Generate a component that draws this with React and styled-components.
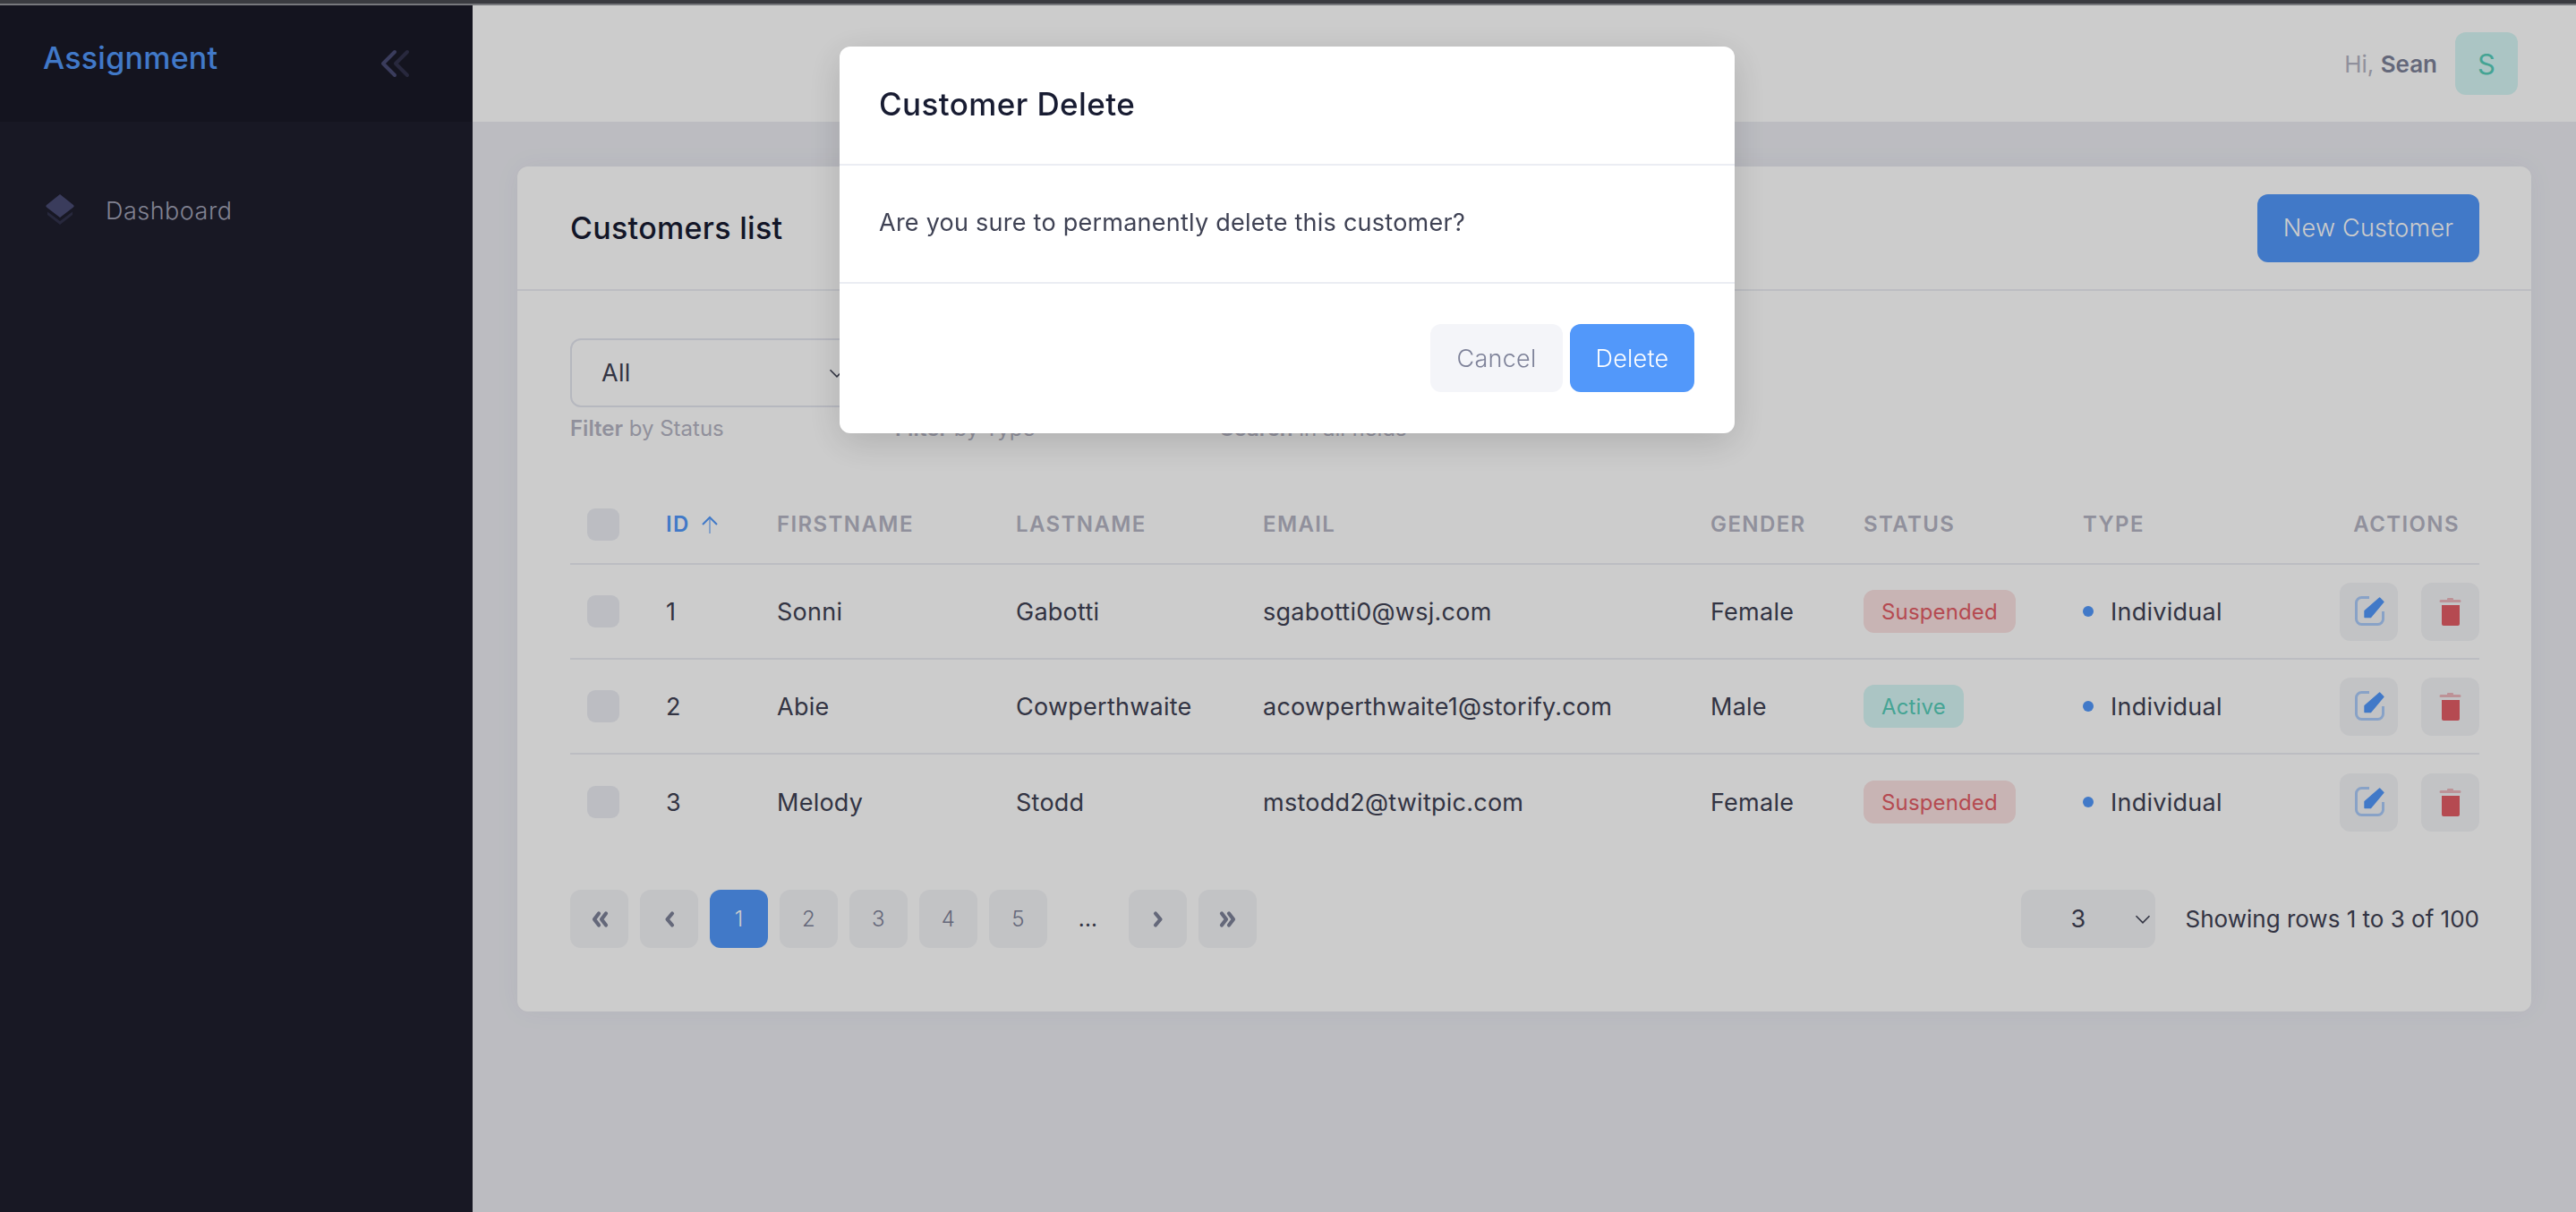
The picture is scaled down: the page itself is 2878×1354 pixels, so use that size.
import React from 'react'
import styled, { createGlobalStyle } from 'styled-components'

const GlobalStyle = createGlobalStyle`
html, body { margin: 0; padding: 0; height: 100%; overflow: hidden; }
body { font-family: "Inter", "Liberation Sans", sans-serif; font-size: 27px; letter-spacing: 0.25px; color: #3f4254; background: #ebecf2; }
* { box-sizing: border-box; }
`

const customers = [
    { id: 1, first: 'Sonni', last: 'Gabotti', email: 'sgabotti0@wsj.com', gender: 'Female', status: 'Suspended' },
    { id: 2, first: 'Abie', last: 'Cowperthwaite', email: 'acowperthwaite1@storify.com', gender: 'Male', status: 'Active' },
    { id: 3, first: 'Melody', last: 'Stodd', email: 'mstodd2@twitpic.com', gender: 'Female', status: 'Suspended' },
]

function Chevron({ size = 20 }) {
    return (
        <svg width={size} height={size} viewBox="0 0 16 16" fill="none" stroke="#3f4254" strokeWidth="1.3">
            <path d="M2 5l6 6 6-6" />
        </svg>
    )
}

function PageArrow({ double, right }) {
    return (
        <svg width="22" height="22" viewBox="0 0 22 22" fill="none" stroke="#7e8299" strokeWidth="4.2" strokeLinecap="round" strokeLinejoin="round">
            <g transform={right ? 'translate(22 0) scale(-1 1)' : undefined}>
                {double ? (
                    <>
                        <path d="M10 4.500L5 11l5 6.500" />
                        <path d="M18 4.500L13 11l5 6.500" />
                    </>
                ) : (
                    <path d="M14 4.500L8.500 11l5.500 6.500" />
                )}
            </g>
        </svg>
    )
}

function EditIcon() {
    return (
        <svg width="40" height="40" viewBox="0 0 40 40" fill="none">
            <path d="M20 4.500H11.500a6 6 0 0 0-6 6v18a6 6 0 0 0 6 6h18a6 6 0 0 0 6-6V20" stroke="#5298fa" strokeOpacity="0.45" strokeWidth="3" />
            <path d="M15 19.500L31.600 5l4.400 4.400L21.600 26.500H15z" fill="#5298fa" stroke="#5298fa" strokeWidth="1.4" strokeLinejoin="round" />
        </svg>
    )
}

function TrashIcon() {
    return (
        <svg width="40" height="40" viewBox="0 0 40 40" fill="none">
            <path d="M10 13h20v21a2 2 0 0 1-2 2H12a2 2 0 0 1-2-2z" fill="#e35d66" />
            <path d="M16 7V6a1 1 0 0 1 1-1h5a1 1 0 0 1 1 1v1h7a1.500 1.500 0 0 1 0 3H9a1.500 1.500 0 0 1 0-3z" fill="#e35d66" fillOpacity="0.4" />
        </svg>
    )
}

function App() {
    return (
        <Page>
            <GlobalStyle />
            <WindowEdge />
            <Layout>
                <Sidebar>
                    <Brand>
                        <BrandName>Assignment</BrandName>
                        <svg width="34" height="32" viewBox="0 0 34 32" fill="none" strokeWidth="4" strokeLinecap="round" strokeLinejoin="round">
                            <path d="M17 3L4 16l13 13" stroke="#494b74" />
                            <path d="M31 3L18 16l13 13" stroke="#494b74" strokeOpacity="0.5" />
                        </svg>
                    </Brand>
                    <NavItem>
                        <svg width="34" height="36" viewBox="0 0 34 36">
                            <path d="M17 1l15 12a1.500 1.500 0 0 1 0 2.400L17 27 2 15.400A1.500 1.500 0 0 1 2 13z" fill="#494b74" />
                            <path d="M3 24l14 11 14-11v-3.500L17 31 3 20.500z" fill="#494b74" fillOpacity="0.45" />
                        </svg>
                        <NavLabel>Dashboard</NavLabel>
                    </NavItem>
                </Sidebar>

                <Main>
                    <TopBar>
                        <Greeting>Hi, <b>Sean</b></Greeting>
                        <Avatar>S</Avatar>
                    </TopBar>
                    <Content>
                        <Card>
                            <CardHeader>
                                <CardTitle>Customers list</CardTitle>
                                <PrimaryButton>New Customer</PrimaryButton>
                            </CardHeader>
                            <CardBody>
                                <Filters>
                                    <Filter>
                                        <SelectBox>All<Chevron /></SelectBox>
                                        <Hint><b>Filter</b> by Status</Hint>
                                    </Filter>
                                    <Filter>
                                        <SelectBox>All<Chevron /></SelectBox>
                                        <Hint><b>Filter</b> by Type</Hint>
                                    </Filter>
                                    <Filter>
                                        <SelectBox />
                                        <Hint><b>Search</b> in all fields</Hint>
                                    </Filter>
                                </Filters>

                                <HeadRow>
                                    <Cell><Check /></Cell>
                                    <HeadCell $active>
                                        ID
                                        <svg width="20" height="22" viewBox="0 0 20 22" fill="none" strokeWidth="2">
                                            <path d="M10 3v18" stroke="#5298fa" strokeOpacity="0.5" />
                                            <path d="M2 11l8-8 8 8" stroke="#5298fa" />
                                        </svg>
                                    </HeadCell>
                                    <HeadCell>FIRSTNAME</HeadCell>
                                    <HeadCell>LASTNAME</HeadCell>
                                    <HeadCell>EMAIL</HeadCell>
                                    <HeadCell>GENDER</HeadCell>
                                    <HeadCell>STATUS</HeadCell>
                                    <HeadCell>TYPE</HeadCell>
                                    <HeadCell $end>ACTIONS</HeadCell>
                                </HeadRow>

                                {customers.map((c, i) => (
                                    <Row key={c.id} $last={i === customers.length - 1}>
                                        <Cell><Check /></Cell>
                                        <Cell>{c.id}</Cell>
                                        <Cell>{c.first}</Cell>
                                        <Cell>{c.last}</Cell>
                                        <Cell>{c.email}</Cell>
                                        <Cell>{c.gender}</Cell>
                                        <Cell><Badge $active={c.status === 'Active'}>{c.status}</Badge></Cell>
                                        <Cell><Dot />Individual</Cell>
                                        <ActionCell>
                                            <IconButton><EditIcon /></IconButton>
                                            <IconButton><TrashIcon /></IconButton>
                                        </ActionCell>
                                    </Row>
                                ))}

                                <Footer>
                                    <Pager>
                                        <PageButton><PageArrow double /></PageButton>
                                        <PageButton><PageArrow /></PageButton>
                                        <PageButton $active>1</PageButton>
                                        <PageButton>2</PageButton>
                                        <PageButton>3</PageButton>
                                        <PageButton>4</PageButton>
                                        <PageButton>5</PageButton>
                                        <Ellipsis>...</Ellipsis>
                                        <PageButton><PageArrow right /></PageButton>
                                        <PageButton><PageArrow double right /></PageButton>
                                    </Pager>
                                    <PageInfo>
                                        <PageSize>3<Chevron /></PageSize>
                                        <RowsText>Showing rows 1 to 3 of 100</RowsText>
                                    </PageInfo>
                                </Footer>
                            </CardBody>
                        </Card>
                    </Content>
                </Main>
            </Layout>

            <Overlay>
                <Modal>
                    <ModalHeader>Customer Delete</ModalHeader>
                    <ModalBody>Are you sure to permanently delete this customer?</ModalBody>
                    <ModalFooter>
                        <CancelButton>Cancel</CancelButton>
                        <DeleteButton>Delete</DeleteButton>
                    </ModalFooter>
                </Modal>
            </Overlay>
        </Page>
    )
}

const Page = styled.div`
height: 100vh;
display: flex;
flex-direction: column;
`

const WindowEdge = styled.div`
height: 6px;
flex: none;
background: #3a3b40;
border-bottom: 2px solid #77787c;
`

const Layout = styled.div`
flex: 1;
display: flex;
min-height: 0;
`

const Sidebar = styled.div`
width: 528px;
flex: none;
background: #1e1e2d;
`

const Brand = styled.div`
height: 130px;
background: #1a1a27;
padding: 0 70px 0 48px;
display: flex;
justify-content: space-between;
align-items: center;
`

const BrandName = styled.div`
font-size: 34px;
font-weight: 500;
color: #5298fa;
margin-top: -14px;
`

const NavItem = styled.div`
display: flex;
align-items: center;
gap: 34px;
padding: 80px 0 0 50px;
`

const NavLabel = styled.div`
color: #a2a3b7;
font-weight: 300;
letter-spacing: 0.5px;
margin-top: 2px;
`

const Main = styled.div`
flex: 1;
min-width: 0;
display: flex;
flex-direction: column;
`

const TopBar = styled.div`
height: 130px;
flex: none;
background: #fff;
padding: 0 65px 0 0;
display: flex;
align-items: center;
justify-content: flex-end;
gap: 20px;
`

const Greeting = styled.div`
font-size: 26px;
letter-spacing: 0;
color: #b5b5c3;

b {
    color: #7e8299;
    font-weight: 600;
}
`

const Avatar = styled.div`
width: 70px;
height: 70px;
border-radius: 12px;
background: #d6f7f5;
color: #57ceba;
font-size: 31px;
display: flex;
justify-content: center;
align-items: center;
`

const Content = styled.div`
padding: 50px;
`

const Card = styled.div`
background: #fff;
border-radius: 12px;
box-shadow: 0 0 30px rgba(82, 63, 105, 0.05);
`

const CardHeader = styled.div`
height: 139px;
padding: 0 58px 0 59px;
border-bottom: 2px solid #ebedf3;
display: flex;
justify-content: space-between;
align-items: center;
`

const CardTitle = styled.div`
font-size: 34px;
font-weight: 500;
letter-spacing: 0.3px;
color: #181c32;
`

const PrimaryButton = styled.div`
width: 248px;
height: 76px;
border-radius: 12px;
background: #5298fa;
color: #fff;
font-weight: 300;
display: flex;
justify-content: center;
align-items: center;
`

const CardBody = styled.div`
padding: 53px 58px 71px 59px;
`

const Filters = styled.div`
display: flex;
gap: 50px;
height: 164px;
`

const Filter = styled.div`
width: 313px;
`

const SelectBox = styled.div`
height: 77px;
padding: 0 3px 0 33px;
border: 2px solid #e4e6ef;
border-radius: 12px;
display: flex;
justify-content: space-between;
align-items: center;
`

const Hint = styled.div`
margin-top: 9px;
font-size: 24px;
letter-spacing: 0;
color: #b5b5c3;

b {
    font-weight: 600;
}
`

const columns = '107px 124px 267px 276px 500px 171px 245px 1fr 180px'

const HeadRow = styled.div`
display: grid;
grid-template-columns: ${columns};
height: 89px;
align-items: center;
border-bottom: 2px solid #ebedf3;
`

const Row = styled.div`
display: grid;
grid-template-columns: ${columns};
height: 106px;
align-items: center;
border-bottom: ${(props) => (props.$last ? 'none' : '2px solid #ebedf3')};
`

const Cell = styled.div`
display: flex;
align-items: center;
white-space: nowrap;
`

const HeadCell = styled(Cell)`
font-size: 24px;
font-weight: 600;
letter-spacing: 1.4px;
gap: 12px;
color: ${(props) => (props.$active ? '#5298fa' : '#b5b5c3')};
justify-content: ${(props) => (props.$end ? 'flex-end' : 'flex-start')};
padding-right: ${(props) => (props.$end ? '22px' : '0')};
`

const ActionCell = styled(Cell)`
justify-content: flex-end;
gap: 26px;
`

const Check = styled.div`
width: 36px;
height: 36px;
margin-left: 19px;
border-radius: 9px;
background: #ebedf3;
`

const Badge = styled.div`
height: 48px;
padding: 0 20px;
border-radius: 12px;
font-size: 24px;
letter-spacing: 0.15px;
display: flex;
align-items: center;
background: ${(props) => (props.$active ? '#d6f7f5' : '#fbe1e1')};
color: ${(props) => (props.$active ? '#57ceba' : '#e35d66')};
`

const Dot = styled.span`
width: 12px;
height: 12px;
margin-right: 19px;
border-radius: 50%;
background: #5298fa;
`

const IconButton = styled.div`
width: 65px;
height: 65px;
border-radius: 12px;
background: #f3f4f7;
display: flex;
justify-content: center;
align-items: center;
`

const Footer = styled.div`
margin-top: 45px;
display: flex;
justify-content: space-between;
align-items: center;
`

const Pager = styled.div`
display: flex;
gap: 13px;
`

const PageButton = styled.div`
width: 65px;
height: 65px;
border-radius: 12px;
background: ${(props) => (props.$active ? '#5298fa' : '#f3f4f7')};
color: ${(props) => (props.$active ? '#fff' : '#7e8299')};
font-size: 24px;
font-weight: 300;
display: flex;
justify-content: center;
align-items: center;
`

const Ellipsis = styled.div`
width: 65px;
height: 65px;
font-size: 24px;
display: flex;
justify-content: center;
align-items: center;
`

const PageInfo = styled.div`
display: flex;
align-items: center;
gap: 34px;
`

const PageSize = styled.div`
width: 150px;
height: 65px;
padding: 0 4px 0 56px;
border-radius: 12px;
background: #f3f4f7;
display: flex;
justify-content: space-between;
align-items: center;
`

const RowsText = styled.div`
font-size: 26px;
letter-spacing: 0;
white-space: nowrap;
`

const Overlay = styled.div`
position: fixed;
inset: 6px 0 0 0;
padding: 46px 2px 0 0;
background: rgba(0, 0, 0, 0.2);
display: flex;
justify-content: center;
align-items: flex-start;
`

const Modal = styled.div`
width: 1000px;
background: #fff;
border-radius: 12px;
box-shadow: 0 10px 40px rgba(0, 0, 0, 0.15);
`

const ModalHeader = styled.div`
height: 133px;
padding: 0 44px 3px 44px;
border-bottom: 2px solid #ebedf3;
font-size: 35px;
font-weight: 500;
letter-spacing: 0.4px;
color: #181c32;
display: flex;
align-items: center;
`

const ModalBody = styled.div`
height: 132px;
padding: 0 44px 3px 44px;
border-bottom: 2px solid #ebedf3;
display: flex;
align-items: center;
`

const ModalFooter = styled.div`
padding: 45px 45px 46px;
display: flex;
justify-content: flex-end;
gap: 8px;
`

const CancelButton = styled.div`
width: 148px;
height: 76px;
border-radius: 12px;
background: #f4f5f9;
color: #7e8299;
font-weight: 300;
display: flex;
justify-content: center;
align-items: center;
`

const DeleteButton = styled(CancelButton)`
width: 139px;
background: #5298fa;
color: #fff;
`

export default App
